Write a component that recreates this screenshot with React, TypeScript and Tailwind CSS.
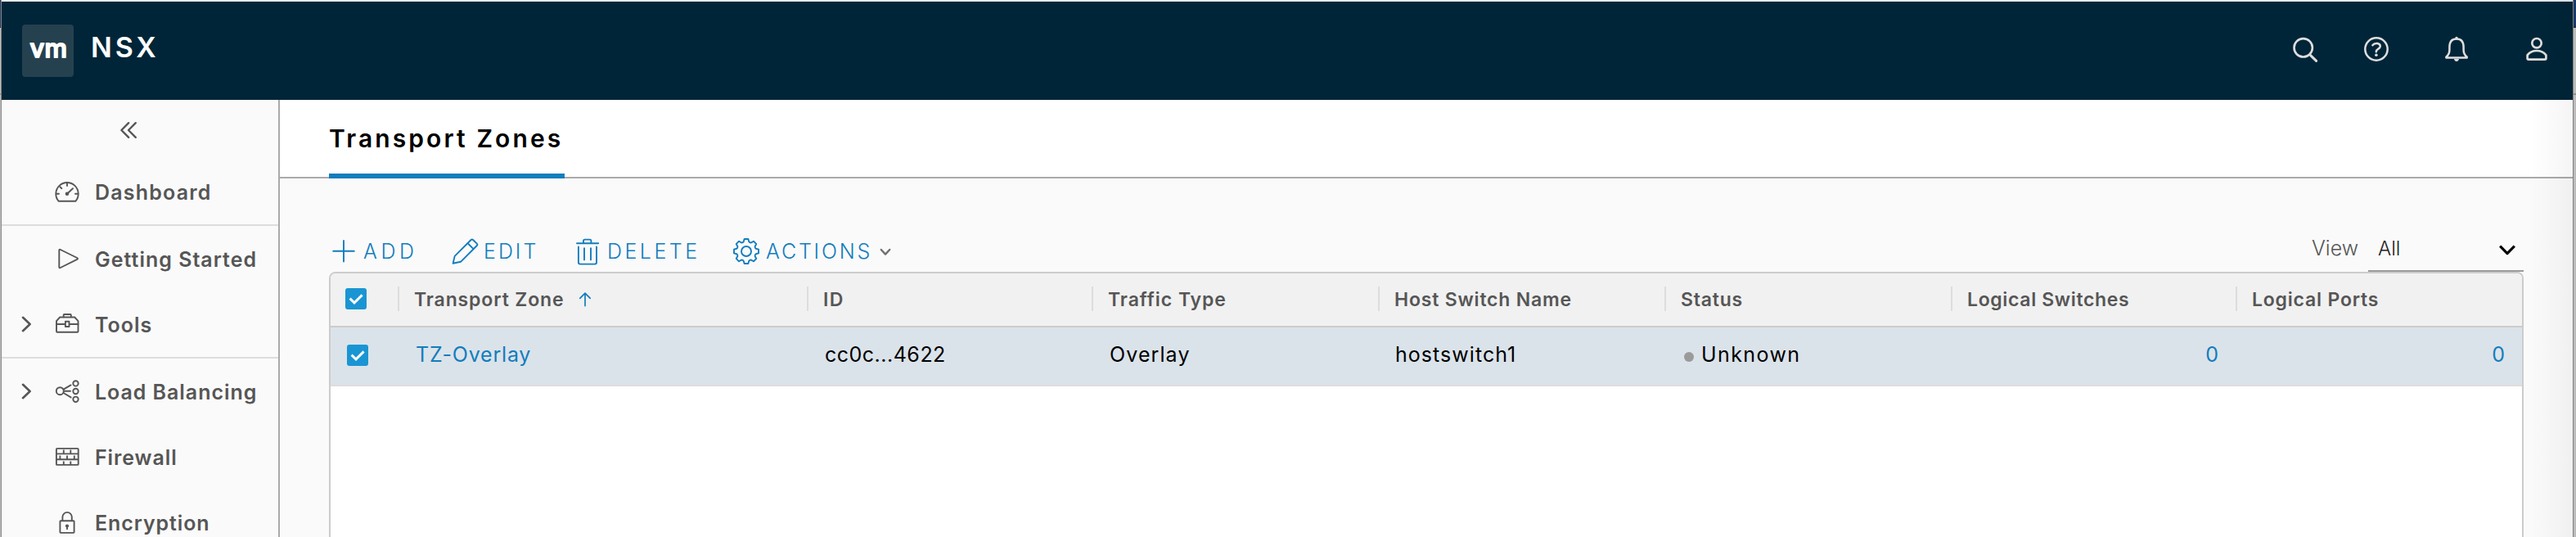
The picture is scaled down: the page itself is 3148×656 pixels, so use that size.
import type { ReactNode } from "react";

function Icon({ children, className, width = 1.9 }: { children: ReactNode; className?: string; width?: number }) {
  return (
    <svg
      viewBox="0 0 36 36"
      className={`size-9 shrink-0 ${className ?? ""}`}
      fill="none"
      stroke="currentColor"
      strokeWidth={width}
      strokeLinecap="round"
      strokeLinejoin="round"
    >
      {children}
    </svg>
  );
}

const gearPath = (() => {
  const pts: string[] = [];
  for (let i = 0; i < 8; i++) {
    const base = (i * Math.PI) / 4 - Math.PI / 2;
    const at = (r: number, deg: number) => {
      const a = base + (deg * Math.PI) / 180;
      return `${(18 + r * Math.cos(a)).toFixed(2)} ${(18 + r * Math.sin(a)).toFixed(2)}`;
    };
    pts.push(`${i === 0 ? "M" : "L"}${at(12.2, -15.5)}`, `L${at(15.2, -9)}`, `L${at(15.2, 9)}`, `L${at(12.2, 15.5)}`, `Q${at(11.2, 22.5)} ${at(12.2, 29.5)}`);
  }
  return pts.join(" ") + "Z";
})();

function Caret() {
  return (
    <svg viewBox="0 0 20 20" className="size-5" fill="none" stroke="currentColor" strokeWidth="2.6" strokeLinecap="round" strokeLinejoin="round">
      <path d="M6 1.8 L14.6 10 L6 18.2" />
    </svg>
  );
}

const navIcons = {
  dashboard: (
    <Icon>
      <path d="M7.7 29.8 A13.7 13.7 0 1 1 28.3 29.8 Z" />
      <path d="M18 7.4 V11 M4.8 20.7 H8 M28 20.7 H31.2 M9.4 12.3 L11.4 14.2 M18 20.7 L25 14.2" />
      <circle cx="18" cy="20.7" r="2.3" fill="currentColor" stroke="none" />
    </Icon>
  ),
  play: (
    <Icon>
      <path d="M8.3 8 Q8.3 6.3 9.9 7 L30.2 17 Q31.8 18 30.2 18.9 L9.9 29 Q8.3 29.7 8.3 28 Z" />
    </Icon>
  ),
  tools: (
    <Icon>
      <path d="M9.2 9.5 H27.2 L31.5 14.2 V26.8 Q31.5 27.8 30.5 27.8 H6 Q5 27.8 5 26.8 V14.2 Z" />
      <path d="M13.7 9.2 V6.8 Q13.7 6 14.5 6 H22 Q22.8 6 22.8 6.8 V9.2 M5 18 H15.6 M20.8 18 H31.5" />
      <path d="M15.9 14.8 H20.5 V21 H15.9 Z" />
    </Icon>
  ),
  balance: (
    <Icon>
      <circle cx="9.3" cy="17.7" r="4.5" />
      <circle cx="28.5" cy="8.4" r="3.2" />
      <circle cx="28.5" cy="18" r="3.2" />
      <circle cx="28.5" cy="27.8" r="3.2" />
      <path d="M13.6 15.6 L22.6 10.4 M14.6 17.7 H22 M13.6 20 L22.6 25.4" />
    </Icon>
  ),
  firewall: (
    <Icon>
      <rect x="4.9" y="7.9" width="26.8" height="20" rx="1" />
      <path strokeLinecap="butt" d="M5 14.4 H31.5 M5 21.3 H31.5 M13.8 9.5 V14 M22.3 9.5 V14 M9.4 16.5 V21 M18 16.5 V21 M26.8 16.5 V21 M13.8 23.5 V28 M22.3 23.5 V28" />
    </Icon>
  ),
  lock: (
    <Icon>
      <rect x="9.4" y="16.3" width="17.2" height="14.6" rx="0.8" />
      <path d="M12.4 16 V11.6 A5.7 5.7 0 0 1 23.8 11.6 V16" />
      <circle cx="18" cy="22.5" r="2.1" fill="currentColor" stroke="none" />
      <path d="M18 23 V26.2" />
    </Icon>
  ),
};

function NavItem({ icon, label, caret, divider, className }: { icon: ReactNode; label: string; caret?: boolean; divider?: boolean; className: string }) {
  return (
    <li className={`flex shrink-0 items-center pl-5 ${divider ? "h-[82px] border-b-2 border-[#dddddd]" : "h-20"}`}>
      <span className="mr-[22px] flex size-5 items-center">{caret && <Caret />}</span>
      {icon}
      <span className={`ml-4 pt-0.5 text-[25px] leading-8 font-semibold whitespace-nowrap ${className}`}>{label}</span>
    </li>
  );
}

function Checkbox({ className }: { className?: string }) {
  return (
    <span className={`flex size-[26px] items-center justify-center rounded-[3px] bg-[#1a95d3] ${className ?? ""}`}>
      <svg viewBox="0 0 26 26" className="size-[26px]" fill="none" stroke="#f6fafc" strokeWidth="3">
        <path d="M5.6 12.6 L11 17.8 L20.6 8.4" />
      </svg>
    </span>
  );
}

function HeaderCell({ children, className }: { children: ReactNode; className: string }) {
  return (
    <div className={`flex h-[30px] items-center border-l-2 border-[#dddddd] pt-0.5 pl-[18px] font-semibold whitespace-nowrap ${className}`}>
      {children}
    </div>
  );
}

const cols = "grid grid-cols-[82px_500px_348px_350px_350px_350px_348px_350px] items-center";

function EdgeStrip({ right }: { right?: boolean }) {
  return (
    <div
      className={`flex shrink-0 flex-col ${right ? "w-1 border-l border-[#808080]" : "w-0.5 border-r border-[#8a8a8a]"}`}
    >
      <div className="h-8 bg-[#1b3a69]" />
      <div className="h-0.5 bg-[#2b2b33]" />
      <div className="h-20 bg-[#bcbcba]" />
      <div className="h-0.5 bg-[#8f8f8f]" />
      <div className="grow bg-[#bdbdbd]" />
    </div>
  );
}

export default function App() {
  return (
    <div className="flex h-[656px] w-[3148px] overflow-hidden bg-[#fafafa] font-['Inter','Liberation_Sans',sans-serif] text-[#565656]">
      <EdgeStrip />
      <div className="relative flex min-w-0 grow flex-col">
        <header className="flex h-[122px] shrink-0 items-center border-t-2 border-[#e3e9ea] bg-[#002538] pr-[26px] pl-[25px]">
          <div className="flex h-16 w-[63px] items-center justify-center rounded bg-[#25414f]">
            <svg viewBox="0 0 63 64" className="h-16 w-[63px]">
              <text x="9.6" y="40" fill="#fff" stroke="#fff" strokeWidth="1.8" strokeLinejoin="round" className="text-[31px] font-medium">
                vm
              </text>
            </svg>
          </div>
          <span className="ml-[21px] pb-[9px] text-[34px] leading-10 font-semibold tracking-[3.9px] text-white">NSX</span>
          <div className="ml-auto flex items-center pb-1 text-[#dedede]">
            <Icon width={2.6}>
              <circle cx="15.7" cy="16.3" r="11.2" />
              <path d="M24.6 25.6 L31.6 32.4" strokeWidth="3" />
            </Icon>
            <Icon width={2.5} className="ml-[51px]">
              <circle cx="18" cy="18" r="13.7" />
              <path d="M13.4 13.2 C15.6 10.2 22.8 10 22.8 14.6 C22.8 17.8 17.8 17.4 17.8 21.2" />
              <circle cx="17.9" cy="25.3" r="1.8" fill="currentColor" stroke="none" />
            </Icon>
            <Icon width={2.5} className="ml-[62px]">
              <path d="M5.4 28.6 V27.4 Q9.4 24.5 9.4 19 V15.5 Q9.4 5.4 18 5.4 Q26.6 5.4 26.6 15.5 V19 Q26.6 24.5 30.7 27.4 V28.6 Z" />
              <path d="M18 4.4 V5" strokeWidth="3.4" />
              <path d="M15 30 H21 Q20.4 33 18 33 Q15.6 33 15 30 Z" fill="currentColor" stroke="none" />
            </Icon>
            <Icon width={2.7} className="ml-[62px]">
              <circle cx="18" cy="10.7" r="5.7" />
              <path d="M6.6 25.4 Q10.6 20 18 20 Q25.4 20 29.4 25.4 V29.2 Q29.4 30.6 28 30.6 H8 Q6.6 30.6 6.6 29.2 Z" />
            </Icon>
          </div>
        </header>

        <div className="flex min-h-0 grow">
          <nav className="flex w-[340px] shrink-0 flex-col overflow-hidden border-r-2 border-[#aaaaaa]">
            <div className="h-[72px] shrink-0 pt-[25px] pl-[143px]">
              <svg viewBox="0 0 24 24" className="size-6" fill="none" stroke="currentColor" strokeWidth="2.4" strokeLinecap="round" strokeLinejoin="round">
                <path d="M12.2 3.2 L3.4 12 L12.2 20.8 M20.8 3.2 L12 12 L20.8 20.8" />
              </svg>
            </div>
            <ul className="flex flex-col">
              <NavItem icon={navIcons.dashboard} label="Dashboard" divider className="tracking-[1.2px]" />
              <NavItem icon={navIcons.play} label="Getting Started" className="tracking-[1px]" />
              <NavItem icon={navIcons.tools} label="Tools" caret divider className="tracking-[1px]" />
              <NavItem icon={navIcons.balance} label="Load Balancing" caret className="tracking-[0.95px]" />
              <NavItem icon={navIcons.firewall} label="Firewall" className="tracking-[0.9px]" />
              <NavItem icon={navIcons.lock} label="Encryption" className="tracking-[0.9px]" />
            </ul>
          </nav>

          <main className="flex min-w-0 grow flex-col">
            <div className="flex h-24 shrink-0 border-b-2 border-[#aaaaaa] bg-white pl-[60px]">
              <h1 className="-mb-0.5 h-24 w-72 border-b-[6px] border-[#127dbd] pt-[27px] text-[30px] leading-10 font-semibold tracking-[3.1px] whitespace-nowrap text-black">
                Transport Zones
              </h1>
            </div>

            <div className="mt-16 flex h-[50px] shrink-0 items-center pl-[60px] text-[25px] leading-8 font-light">
              <div className="flex items-center text-[#127dbd]">
                <button className="flex w-[148px] items-center">
                  <Icon>
                    <path d="M18 5 V30.6 M5.2 17.8 H30.8" />
                  </Icon>
                  <span className="ml-[6px] tracking-[4.6px]">ADD</span>
                </button>
                <button className="flex w-[150px] items-center">
                  <Icon>
                    <path d="M3.6 32.8 L5.7 23.9 L25.6 4 Q26.9 2.8 28.1 4 L32.8 8.6 Q34 9.8 32.8 11 L13 30.8 Z M21.4 8 L28.8 15.4" />
                  </Icon>
                  <span className="ml-[5px] tracking-[3px]">EDIT</span>
                </button>
                <button className="flex w-[194px] items-center">
                  <Icon>
                    <path d="M5 8.3 H31.2 M13 7.8 V5.2 Q13 3.6 14.6 3.6 H20.8 Q22.4 3.6 22.4 5.2 V7.8 M6.9 12.4 V31.6 Q6.9 33.6 8.9 33.6 H27 Q29 33.6 29 31.6 V12.4 M14 14.2 V28.4 M22 14.2 V28.4" />
                  </Icon>
                  <span className="ml-[6px] tracking-[3.5px]">DELETE</span>
                </button>
                <button className="flex items-center">
                  <Icon>
                    <path d={gearPath} />
                    <circle cx="18" cy="18" r="6" />
                  </Icon>
                  <span className="ml-[6px] tracking-[2.8px]">ACTIONS</span>
                  <svg viewBox="0 0 14 10" className="mt-0.5 ml-[9px] h-2.5 w-3.5" fill="none" stroke="#707070" strokeWidth="2.4" strokeLinecap="round" strokeLinejoin="round">
                    <path d="M1.8 2 L7 7.6 L12.2 2" />
                  </svg>
                </button>
              </div>
              <div className="mr-15 ml-auto flex h-full items-stretch">
                <span className="w-[69px] pt-[5px]">View</span>
                <div className="flex w-[190px] justify-between border-b-2 border-[#9a9a9a] pt-[5px] pr-2 pl-3 text-[#222]">
                  <span className="pt-px text-[24px]">All</span>
                  <svg viewBox="0 0 24 16" className="mt-[11px] h-4 w-6" fill="none" stroke="#000" strokeWidth="3.2" strokeLinejoin="round">
                    <path d="M3.2 2.6 L12 11.6 L20.8 2.6" />
                  </svg>
                </div>
              </div>
            </div>

            <div className="mr-15 ml-[60px] grow overflow-hidden rounded-t-lg border-2 border-b-0 border-[#cccccc] bg-white">
              <div className={`${cols} h-[66px] border-b-2 border-[#cccccc] bg-[#f1f1f1] pb-0.5 text-[23px]`}>
                <Checkbox className="ml-[18px]" />
                <HeaderCell className="tracking-[0.88px]">
                  Transport Zone
                  <svg viewBox="0 0 16 20" className="ml-[17px] h-5 w-4" fill="none" stroke="#127dbd" strokeWidth="1.7" strokeLinecap="round" strokeLinejoin="round">
                    <path d="M8 17.6 V2.4 M1.8 8.4 L8 2.2 L14.2 8.4" />
                  </svg>
                </HeaderCell>
                <HeaderCell className="tracking-[1.4px]">ID</HeaderCell>
                <HeaderCell className="tracking-[0.95px]">Traffic Type</HeaderCell>
                <HeaderCell className="tracking-[0.8px]">Host Switch Name</HeaderCell>
                <HeaderCell className="tracking-[0.8px]">Status</HeaderCell>
                <HeaderCell className="tracking-[0.65px]">Logical Switches</HeaderCell>
                <HeaderCell className="tracking-[0.8px]">Logical Ports</HeaderCell>
              </div>
              <div className={`${cols} h-[72px] border-b-2 border-[#dddddd] bg-[#dbe3ea] pb-0.5 text-[25px] text-black`}>
                <Checkbox className="ml-5" />
                <a className="pl-[22px] tracking-[0.8px] text-[#127dbd]">TZ-Overlay</a>
                <span className="pl-[22px] tracking-[0.5px]">cc0c...4622</span>
                <span className="pl-[22px] tracking-[1.1px]">Overlay</span>
                <span className="pl-[21px] tracking-[1.05px]">hostswitch1</span>
                <span className="flex items-center pl-6 tracking-[1.4px]">
                  <span className="mt-1 mr-[9px] size-3 rounded-full bg-[#9a9a9a]" />
                  Unknown
                </span>
                <a className="pr-[21px] text-right text-[#127dbd]">0</a>
                <a className="pr-[21px] text-right text-[#127dbd]">0</a>
              </div>
            </div>
          </main>
        </div>
        <div className="pointer-events-none absolute top-0 right-0 bottom-0 w-13 bg-linear-to-r from-black/0 to-black/4" />
      </div>
      <EdgeStrip right />
    </div>
  );
}
